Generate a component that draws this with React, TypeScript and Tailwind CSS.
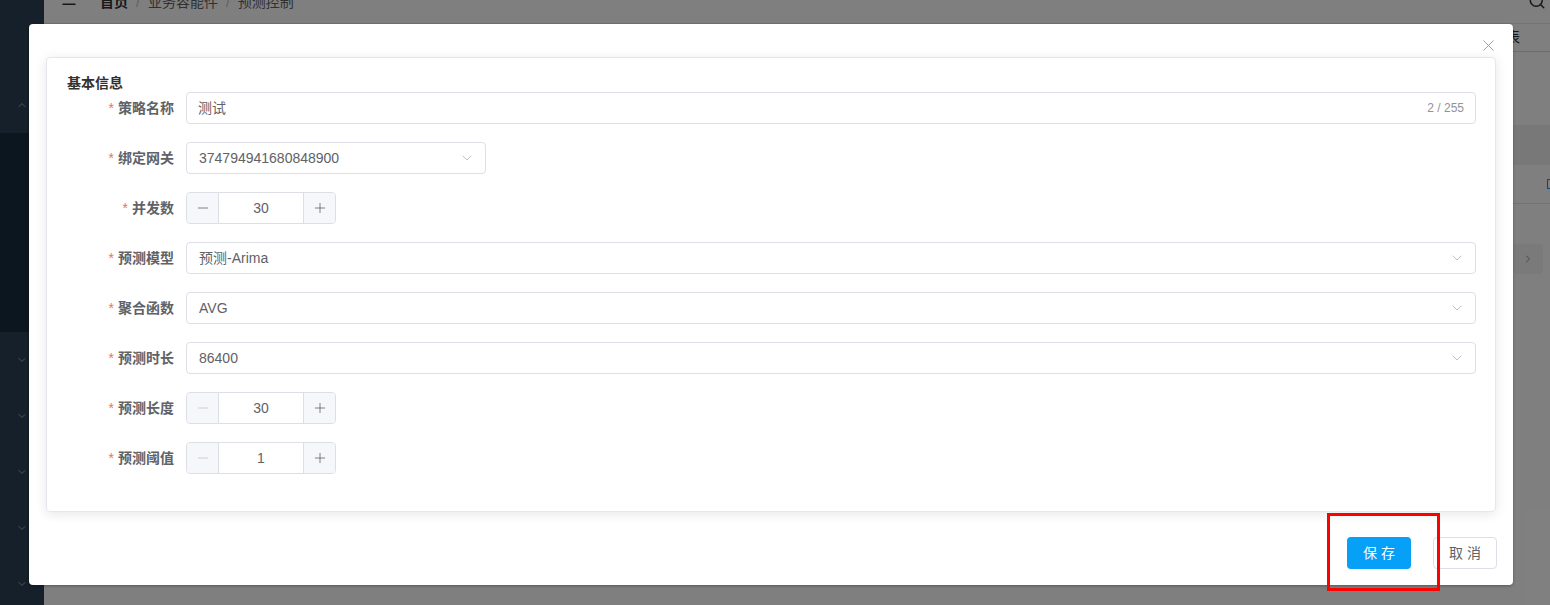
import { ChevronDown, ChevronUp, ChevronRight, Minus, Plus, X, Search, Menu } from 'lucide-react';

const font = { fontFamily: '"Liberation Sans", "Noto Sans CJK SC", sans-serif' };

function Label({ text }: { text: string }) {
  return (
    <div className="w-[120px] shrink-0 pr-[12px] flex items-center justify-end text-[14px] font-bold text-[#606266]">
      <span className="text-[#f56c6c] mr-[4px] font-normal">*</span>
      {text}
    </div>
  );
}

function SelectBox({ value, wide }: { value: string; wide?: boolean }) {
  return (
    <div
      className={`${wide ? 'flex-1' : 'w-[300px]'} h-[32px] border border-[#dcdfe6] rounded-[4px] flex items-center justify-between pl-[12px] pr-[10px] text-[14px] text-[#606266] bg-white`}
    >
      <span>{value}</span>
      <ChevronDown size={16} strokeWidth={1.3} className="text-[#b4b8bf]" />
    </div>
  );
}

function NumberBox({ value, minusDisabled }: { value: string; minusDisabled?: boolean }) {
  return (
    <div className="w-[150px] h-[32px] border border-[#dcdfe6] rounded-[4px] flex overflow-hidden bg-white">
      <div className="w-[32px] bg-[#f5f7fa] border-r border-[#dcdfe6] flex items-center justify-center">
        <Minus size={16} strokeWidth={1.2} className={minusDisabled ? 'text-[#c0c4cc]' : 'text-[#606266]'} />
      </div>
      <div className="flex-1 flex items-center justify-center text-[14px] text-[#606266]">{value}</div>
      <div className="w-[32px] bg-[#f5f7fa] border-l border-[#dcdfe6] flex items-center justify-center">
        <Plus size={16} strokeWidth={1.2} className="text-[#606266]" />
      </div>
    </div>
  );
}

function Row({ label, children }: { label: string; children: React.ReactNode }) {
  return (
    <div className="flex h-[32px] mb-[18px]">
      <Label text={label} />
      {children}
    </div>
  );
}

export default function App() {
  return (
    <div className="relative w-[1550px] h-[605px] overflow-hidden bg-white" style={font}>
      {/* page behind the dialog */}
      <div className="flex h-full">
        <div className="w-[44px] shrink-0 bg-[#2a4054] flex flex-col">
          <div className="h-[133px] flex items-end justify-center pb-[22px]">
            <ChevronUp size={12} className="text-[#9aa4ae]" />
          </div>
          <div className="h-[199px] bg-[#182c3c]" />
          <div className="flex flex-col items-center pt-[22px] gap-[44px]">
            {[0, 1, 2, 3, 4].map((i) => (
              <ChevronDown key={i} size={12} className="text-[#9aa4ae]" />
            ))}
          </div>
        </div>
        <div className="flex-1 flex flex-col">
          <div className="h-[24px] border-b border-[#e6e6e6] flex items-start pl-[16px] overflow-hidden">
            <Menu size={18} className="-mt-[10px] text-[#303133]" />
            <div className="-mt-[8px] ml-[22px] text-[14px] text-[#303133] flex gap-[8px]">
              <span className="font-bold">首页</span>
              <span className="text-[#c0c4cc]">/</span>
              <span className="text-[#606266]">业务容能件</span>
              <span className="text-[#c0c4cc]">/</span>
              <span className="text-[#606266]">预测控制</span>
            </div>
            <div className="ml-auto mr-[4px] -mt-[8px]">
              <Search size={18} className="text-[#303133]" />
            </div>
          </div>
          <div className="h-[28px] border-b border-[#d8d8d8] flex justify-end pr-[30px] items-center text-[14px] text-[#303133]">
            列表
          </div>
          <div className="h-[73px]" />
          <div className="h-[40px] bg-[#f0f0f0]" />
          <div className="h-[39px] border-b border-[#e6e6e6] flex justify-end items-center">
            <div className="w-[10px] h-[10px] border border-[#1890ff] -mr-[7px]" />
          </div>
          <div className="h-[40px]" />
          <div className="flex justify-end pr-[7px]">
            <div className="w-[30px] h-[30px] rounded-[3px] bg-[#f4f4f5] flex items-center justify-center">
              <ChevronRight size={12} className="text-[#909399]" />
            </div>
          </div>
        </div>
      </div>

      {/* mask */}
      <div className="absolute inset-0 bg-black/50" />

      {/* dialog */}
      <div className="absolute left-[29px] top-[24px] w-[1484px] h-[561px] bg-white rounded-[4px] shadow-[0_1px_3px_rgba(0,0,0,0.3)] flex flex-col pl-[17px] pr-[16px] pt-[33px]">
        <X size={19} strokeWidth={1.1} className="absolute right-[15px] top-[12px] text-[#909399]" />

        <div className="h-[455px] mr-[1px] border border-[#e4e7ed] rounded-[4px] shadow-[0_2px_12px_0_rgba(0,0,0,0.1)] pt-[16px] pl-[19px] pr-[19px]">
          <div className="h-[18px] leading-[18px] text-[14px] font-bold text-[#303133] pl-[1px]">基本信息</div>

          <Row label="策略名称">
            <div className="flex-1 h-[32px] border border-[#dcdfe6] rounded-[4px] flex items-center justify-between pl-[11px] pr-[11px]">
              <span className="text-[14px] text-[#606266]">测试</span>
              <span className="text-[12px] text-[#909399]">2 / 255</span>
            </div>
          </Row>
          <Row label="绑定网关">
            <SelectBox value="374794941680848900" />
          </Row>
          <Row label="并发数">
            <NumberBox value="30" />
          </Row>
          <Row label="预测模型">
            <SelectBox value="预测-Arima" wide />
          </Row>
          <Row label="聚合函数">
            <SelectBox value="AVG" wide />
          </Row>
          <Row label="预测时长">
            <SelectBox value="86400" wide />
          </Row>
          <Row label="预测长度">
            <NumberBox value="30" minusDisabled />
          </Row>
          <Row label="预测阈值">
            <NumberBox value="1" minusDisabled />
          </Row>
        </div>

        <div className="flex justify-end items-center mt-[25px] gap-[22px]">
          <button className="w-[64px] h-[32px] rounded-[4px] bg-[#06a0f6] text-white text-[14px] tracking-[4px] pl-[4px]">
            保存
          </button>
          <button className="w-[64px] h-[32px] rounded-[4px] border border-[#dcdfe6] bg-white text-[#606266] text-[14px] tracking-[4px] pl-[4px]">
            取消
          </button>
        </div>
      </div>

      {/* annotation around save */}
      <div className="absolute left-[1327px] top-[513px] w-[113px] h-[78px] border-[3px] border-[#ff0000]" />
    </div>
  );
}
